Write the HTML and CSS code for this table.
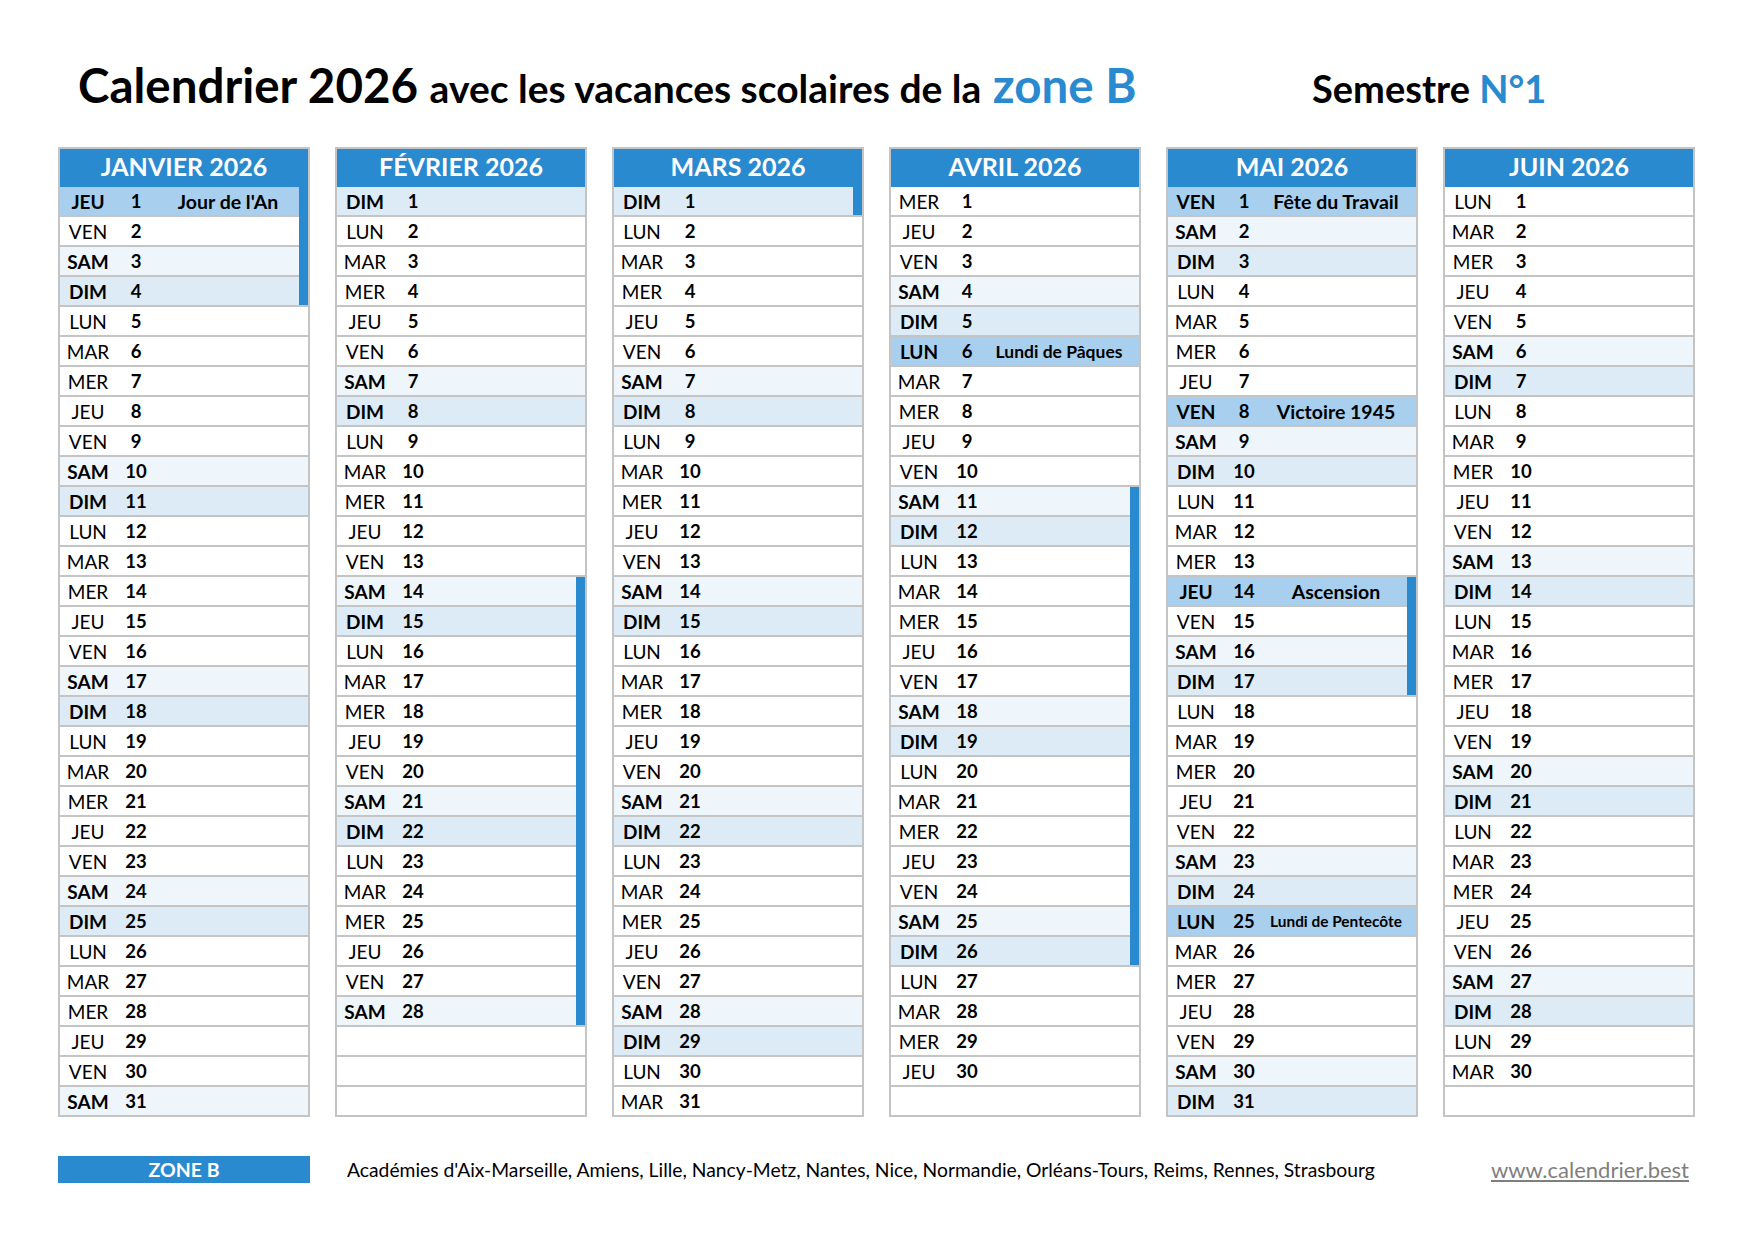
FILE: index.html
```html
<!DOCTYPE html>
<html lang="fr">
<head>
<meta charset="utf-8">
<title>Calendrier 2026 zone B - Semestre 1</title>
<link rel="stylesheet" href="styles.css">
</head>
<body>
<div class="page">
  <header class="title">
    <h1 class="t-main">Calendrier 2026 <span class="t-mid">avec les vacances scolaires de la</span> <span class="t-zone">zone B</span></h1>
    <div class="semestre">Semestre <span class="blue">N°1</span></div>
  </header>

  <main class="months">
    <section class="month">
      <div class="mh">JANVIER 2026</div>
      <div class="r hol v"><span class="d">JEU</span><span class="n">1</span><span class="l">Jour de l'An</span></div>
      <div class="r v"><span class="d">VEN</span><span class="n">2</span></div>
      <div class="r sa v"><span class="d">SAM</span><span class="n">3</span></div>
      <div class="r di v ve"><span class="d">DIM</span><span class="n">4</span></div>
      <div class="r"><span class="d">LUN</span><span class="n">5</span></div>
      <div class="r"><span class="d">MAR</span><span class="n">6</span></div>
      <div class="r"><span class="d">MER</span><span class="n">7</span></div>
      <div class="r"><span class="d">JEU</span><span class="n">8</span></div>
      <div class="r"><span class="d">VEN</span><span class="n">9</span></div>
      <div class="r sa"><span class="d">SAM</span><span class="n">10</span></div>
      <div class="r di"><span class="d">DIM</span><span class="n">11</span></div>
      <div class="r"><span class="d">LUN</span><span class="n">12</span></div>
      <div class="r"><span class="d">MAR</span><span class="n">13</span></div>
      <div class="r"><span class="d">MER</span><span class="n">14</span></div>
      <div class="r"><span class="d">JEU</span><span class="n">15</span></div>
      <div class="r"><span class="d">VEN</span><span class="n">16</span></div>
      <div class="r sa"><span class="d">SAM</span><span class="n">17</span></div>
      <div class="r di"><span class="d">DIM</span><span class="n">18</span></div>
      <div class="r"><span class="d">LUN</span><span class="n">19</span></div>
      <div class="r"><span class="d">MAR</span><span class="n">20</span></div>
      <div class="r"><span class="d">MER</span><span class="n">21</span></div>
      <div class="r"><span class="d">JEU</span><span class="n">22</span></div>
      <div class="r"><span class="d">VEN</span><span class="n">23</span></div>
      <div class="r sa"><span class="d">SAM</span><span class="n">24</span></div>
      <div class="r di"><span class="d">DIM</span><span class="n">25</span></div>
      <div class="r"><span class="d">LUN</span><span class="n">26</span></div>
      <div class="r"><span class="d">MAR</span><span class="n">27</span></div>
      <div class="r"><span class="d">MER</span><span class="n">28</span></div>
      <div class="r"><span class="d">JEU</span><span class="n">29</span></div>
      <div class="r"><span class="d">VEN</span><span class="n">30</span></div>
      <div class="r sa"><span class="d">SAM</span><span class="n">31</span></div>
    </section>

    <section class="month">
      <div class="mh">FÉVRIER 2026</div>
      <div class="r di"><span class="d">DIM</span><span class="n">1</span></div>
      <div class="r"><span class="d">LUN</span><span class="n">2</span></div>
      <div class="r"><span class="d">MAR</span><span class="n">3</span></div>
      <div class="r"><span class="d">MER</span><span class="n">4</span></div>
      <div class="r"><span class="d">JEU</span><span class="n">5</span></div>
      <div class="r"><span class="d">VEN</span><span class="n">6</span></div>
      <div class="r sa"><span class="d">SAM</span><span class="n">7</span></div>
      <div class="r di"><span class="d">DIM</span><span class="n">8</span></div>
      <div class="r"><span class="d">LUN</span><span class="n">9</span></div>
      <div class="r"><span class="d">MAR</span><span class="n">10</span></div>
      <div class="r"><span class="d">MER</span><span class="n">11</span></div>
      <div class="r"><span class="d">JEU</span><span class="n">12</span></div>
      <div class="r"><span class="d">VEN</span><span class="n">13</span></div>
      <div class="r sa v"><span class="d">SAM</span><span class="n">14</span></div>
      <div class="r di v"><span class="d">DIM</span><span class="n">15</span></div>
      <div class="r v"><span class="d">LUN</span><span class="n">16</span></div>
      <div class="r v"><span class="d">MAR</span><span class="n">17</span></div>
      <div class="r v"><span class="d">MER</span><span class="n">18</span></div>
      <div class="r v"><span class="d">JEU</span><span class="n">19</span></div>
      <div class="r v"><span class="d">VEN</span><span class="n">20</span></div>
      <div class="r sa v"><span class="d">SAM</span><span class="n">21</span></div>
      <div class="r di v"><span class="d">DIM</span><span class="n">22</span></div>
      <div class="r v"><span class="d">LUN</span><span class="n">23</span></div>
      <div class="r v"><span class="d">MAR</span><span class="n">24</span></div>
      <div class="r v"><span class="d">MER</span><span class="n">25</span></div>
      <div class="r v"><span class="d">JEU</span><span class="n">26</span></div>
      <div class="r v"><span class="d">VEN</span><span class="n">27</span></div>
      <div class="r sa v ve"><span class="d">SAM</span><span class="n">28</span></div>
      <div class="r"></div>
      <div class="r"></div>
      <div class="r"></div>
    </section>

    <section class="month">
      <div class="mh">MARS 2026</div>
      <div class="r di v ve"><span class="d">DIM</span><span class="n">1</span></div>
      <div class="r"><span class="d">LUN</span><span class="n">2</span></div>
      <div class="r"><span class="d">MAR</span><span class="n">3</span></div>
      <div class="r"><span class="d">MER</span><span class="n">4</span></div>
      <div class="r"><span class="d">JEU</span><span class="n">5</span></div>
      <div class="r"><span class="d">VEN</span><span class="n">6</span></div>
      <div class="r sa"><span class="d">SAM</span><span class="n">7</span></div>
      <div class="r di"><span class="d">DIM</span><span class="n">8</span></div>
      <div class="r"><span class="d">LUN</span><span class="n">9</span></div>
      <div class="r"><span class="d">MAR</span><span class="n">10</span></div>
      <div class="r"><span class="d">MER</span><span class="n">11</span></div>
      <div class="r"><span class="d">JEU</span><span class="n">12</span></div>
      <div class="r"><span class="d">VEN</span><span class="n">13</span></div>
      <div class="r sa"><span class="d">SAM</span><span class="n">14</span></div>
      <div class="r di"><span class="d">DIM</span><span class="n">15</span></div>
      <div class="r"><span class="d">LUN</span><span class="n">16</span></div>
      <div class="r"><span class="d">MAR</span><span class="n">17</span></div>
      <div class="r"><span class="d">MER</span><span class="n">18</span></div>
      <div class="r"><span class="d">JEU</span><span class="n">19</span></div>
      <div class="r"><span class="d">VEN</span><span class="n">20</span></div>
      <div class="r sa"><span class="d">SAM</span><span class="n">21</span></div>
      <div class="r di"><span class="d">DIM</span><span class="n">22</span></div>
      <div class="r"><span class="d">LUN</span><span class="n">23</span></div>
      <div class="r"><span class="d">MAR</span><span class="n">24</span></div>
      <div class="r"><span class="d">MER</span><span class="n">25</span></div>
      <div class="r"><span class="d">JEU</span><span class="n">26</span></div>
      <div class="r"><span class="d">VEN</span><span class="n">27</span></div>
      <div class="r sa"><span class="d">SAM</span><span class="n">28</span></div>
      <div class="r di"><span class="d">DIM</span><span class="n">29</span></div>
      <div class="r"><span class="d">LUN</span><span class="n">30</span></div>
      <div class="r"><span class="d">MAR</span><span class="n">31</span></div>
    </section>

    <section class="month">
      <div class="mh">AVRIL 2026</div>
      <div class="r"><span class="d">MER</span><span class="n">1</span></div>
      <div class="r"><span class="d">JEU</span><span class="n">2</span></div>
      <div class="r"><span class="d">VEN</span><span class="n">3</span></div>
      <div class="r sa"><span class="d">SAM</span><span class="n">4</span></div>
      <div class="r di"><span class="d">DIM</span><span class="n">5</span></div>
      <div class="r hol"><span class="d">LUN</span><span class="n">6</span><span class="l sm">Lundi de Pâques</span></div>
      <div class="r"><span class="d">MAR</span><span class="n">7</span></div>
      <div class="r"><span class="d">MER</span><span class="n">8</span></div>
      <div class="r"><span class="d">JEU</span><span class="n">9</span></div>
      <div class="r"><span class="d">VEN</span><span class="n">10</span></div>
      <div class="r sa v"><span class="d">SAM</span><span class="n">11</span></div>
      <div class="r di v"><span class="d">DIM</span><span class="n">12</span></div>
      <div class="r v"><span class="d">LUN</span><span class="n">13</span></div>
      <div class="r v"><span class="d">MAR</span><span class="n">14</span></div>
      <div class="r v"><span class="d">MER</span><span class="n">15</span></div>
      <div class="r v"><span class="d">JEU</span><span class="n">16</span></div>
      <div class="r v"><span class="d">VEN</span><span class="n">17</span></div>
      <div class="r sa v"><span class="d">SAM</span><span class="n">18</span></div>
      <div class="r di v"><span class="d">DIM</span><span class="n">19</span></div>
      <div class="r v"><span class="d">LUN</span><span class="n">20</span></div>
      <div class="r v"><span class="d">MAR</span><span class="n">21</span></div>
      <div class="r v"><span class="d">MER</span><span class="n">22</span></div>
      <div class="r v"><span class="d">JEU</span><span class="n">23</span></div>
      <div class="r v"><span class="d">VEN</span><span class="n">24</span></div>
      <div class="r sa v"><span class="d">SAM</span><span class="n">25</span></div>
      <div class="r di v ve"><span class="d">DIM</span><span class="n">26</span></div>
      <div class="r"><span class="d">LUN</span><span class="n">27</span></div>
      <div class="r"><span class="d">MAR</span><span class="n">28</span></div>
      <div class="r"><span class="d">MER</span><span class="n">29</span></div>
      <div class="r"><span class="d">JEU</span><span class="n">30</span></div>
      <div class="r"></div>
    </section>

    <section class="month">
      <div class="mh">MAI 2026</div>
      <div class="r hol"><span class="d">VEN</span><span class="n">1</span><span class="l">Fête du Travail</span></div>
      <div class="r sa"><span class="d">SAM</span><span class="n">2</span></div>
      <div class="r di"><span class="d">DIM</span><span class="n">3</span></div>
      <div class="r"><span class="d">LUN</span><span class="n">4</span></div>
      <div class="r"><span class="d">MAR</span><span class="n">5</span></div>
      <div class="r"><span class="d">MER</span><span class="n">6</span></div>
      <div class="r"><span class="d">JEU</span><span class="n">7</span></div>
      <div class="r hol"><span class="d">VEN</span><span class="n">8</span><span class="l">Victoire 1945</span></div>
      <div class="r sa"><span class="d">SAM</span><span class="n">9</span></div>
      <div class="r di"><span class="d">DIM</span><span class="n">10</span></div>
      <div class="r"><span class="d">LUN</span><span class="n">11</span></div>
      <div class="r"><span class="d">MAR</span><span class="n">12</span></div>
      <div class="r"><span class="d">MER</span><span class="n">13</span></div>
      <div class="r hol v"><span class="d">JEU</span><span class="n">14</span><span class="l">Ascension</span></div>
      <div class="r v"><span class="d">VEN</span><span class="n">15</span></div>
      <div class="r sa v"><span class="d">SAM</span><span class="n">16</span></div>
      <div class="r di v ve"><span class="d">DIM</span><span class="n">17</span></div>
      <div class="r"><span class="d">LUN</span><span class="n">18</span></div>
      <div class="r"><span class="d">MAR</span><span class="n">19</span></div>
      <div class="r"><span class="d">MER</span><span class="n">20</span></div>
      <div class="r"><span class="d">JEU</span><span class="n">21</span></div>
      <div class="r"><span class="d">VEN</span><span class="n">22</span></div>
      <div class="r sa"><span class="d">SAM</span><span class="n">23</span></div>
      <div class="r di"><span class="d">DIM</span><span class="n">24</span></div>
      <div class="r hol"><span class="d">LUN</span><span class="n">25</span><span class="l xs">Lundi de Pentecôte</span></div>
      <div class="r"><span class="d">MAR</span><span class="n">26</span></div>
      <div class="r"><span class="d">MER</span><span class="n">27</span></div>
      <div class="r"><span class="d">JEU</span><span class="n">28</span></div>
      <div class="r"><span class="d">VEN</span><span class="n">29</span></div>
      <div class="r sa"><span class="d">SAM</span><span class="n">30</span></div>
      <div class="r di"><span class="d">DIM</span><span class="n">31</span></div>
    </section>

    <section class="month">
      <div class="mh">JUIN 2026</div>
      <div class="r"><span class="d">LUN</span><span class="n">1</span></div>
      <div class="r"><span class="d">MAR</span><span class="n">2</span></div>
      <div class="r"><span class="d">MER</span><span class="n">3</span></div>
      <div class="r"><span class="d">JEU</span><span class="n">4</span></div>
      <div class="r"><span class="d">VEN</span><span class="n">5</span></div>
      <div class="r sa"><span class="d">SAM</span><span class="n">6</span></div>
      <div class="r di"><span class="d">DIM</span><span class="n">7</span></div>
      <div class="r"><span class="d">LUN</span><span class="n">8</span></div>
      <div class="r"><span class="d">MAR</span><span class="n">9</span></div>
      <div class="r"><span class="d">MER</span><span class="n">10</span></div>
      <div class="r"><span class="d">JEU</span><span class="n">11</span></div>
      <div class="r"><span class="d">VEN</span><span class="n">12</span></div>
      <div class="r sa"><span class="d">SAM</span><span class="n">13</span></div>
      <div class="r di"><span class="d">DIM</span><span class="n">14</span></div>
      <div class="r"><span class="d">LUN</span><span class="n">15</span></div>
      <div class="r"><span class="d">MAR</span><span class="n">16</span></div>
      <div class="r"><span class="d">MER</span><span class="n">17</span></div>
      <div class="r"><span class="d">JEU</span><span class="n">18</span></div>
      <div class="r"><span class="d">VEN</span><span class="n">19</span></div>
      <div class="r sa"><span class="d">SAM</span><span class="n">20</span></div>
      <div class="r di"><span class="d">DIM</span><span class="n">21</span></div>
      <div class="r"><span class="d">LUN</span><span class="n">22</span></div>
      <div class="r"><span class="d">MAR</span><span class="n">23</span></div>
      <div class="r"><span class="d">MER</span><span class="n">24</span></div>
      <div class="r"><span class="d">JEU</span><span class="n">25</span></div>
      <div class="r"><span class="d">VEN</span><span class="n">26</span></div>
      <div class="r sa"><span class="d">SAM</span><span class="n">27</span></div>
      <div class="r di"><span class="d">DIM</span><span class="n">28</span></div>
      <div class="r"><span class="d">LUN</span><span class="n">29</span></div>
      <div class="r"><span class="d">MAR</span><span class="n">30</span></div>
      <div class="r"></div>
    </section>
  </main>

  <footer class="footer">
    <div class="zone">ZONE B</div>
    <div class="acad">Académies d'Aix-Marseille, Amiens, Lille, Nancy-Metz, Nantes, Nice, Normandie, Orléans-Tours, Reims, Rennes, Strasbourg</div>
    <a class="url" href="#">www.calendrier.best</a>
  </footer>
</div>
</body>
</html>
```

FILE: styles.css
```css
* { box-sizing: border-box; }

body {
  margin: 0;
  background: #fff;
  color: #000;
  font-family: Lato, "Open Sans", "Liberation Sans", sans-serif;
}

.page {
  width: 1754px;
  height: 1240px;
  padding: 56px 0 0 58px;
}

/* ---------- title ---------- */
.title {
  display: grid;
  grid-template-columns: 1234px auto;
  align-items: baseline;
  padding-left: 20px;
  height: 58px;
  margin-bottom: 33px;
}

.t-main {
  margin: 0;
  font-size: 47.5px;
  line-height: 58px;
  font-weight: 700;
  white-space: nowrap;
}

.t-mid { font-size: 39px; }

.t-zone { font-size: 47.5px; color: #2a8ad0; }

.semestre {
  font-size: 38px;
  font-weight: 700;
  white-space: nowrap;
}

.blue { color: #2a8ad0; }

/* ---------- months ---------- */
.months {
  display: grid;
  grid-template-columns: repeat(6, 252px);
  column-gap: 25px;
}

.month {
  border: 2px solid #c4c4c4;
}

.mh {
  height: 38px;
  line-height: 35px;
  background: #2a8ad0;
  color: #fff;
  font-size: 25px;
  font-weight: 700;
  text-align: center;
}

.r {
  position: relative;
  display: flex;
  align-items: center;
  height: 30px;
  border-bottom: 2px solid #c4c4c4;
  font-size: 18.5px;
}

.r:last-child { border-bottom: 0; height: 28px; }

.d {
  width: 56px;
  font-size: 19px;
  text-align: center;
}

.n {
  width: 40px;
  text-align: center;
  font-weight: 700;
}

.l {
  flex: 1;
  padding-right: 8px;
  font-size: 19.5px;
  text-align: center;
  font-weight: 700;
  white-space: nowrap;
}

.l.sm { font-size: 17.5px; }
.l.xs { font-size: 15.4px; }

.sa { background: #eef6fc; }
.di { background: #ddebf7; }
.hol { background: #a8cfee; }

.sa .d, .di .d, .hol .d { font-weight: 700; }

/* school holidays bar */
.v::after {
  content: "";
  position: absolute;
  top: 0;
  right: 0;
  bottom: -2px;
  width: 9px;
  background: #2a8ad0;
}

.v.ve::after { bottom: 0; }

/* ---------- footer ---------- */
.footer {
  display: flex;
  align-items: center;
  width: 1637px;
  height: 27px;
  margin-top: 39px;
}

.zone {
  width: 252px;
  height: 27px;
  line-height: 27px;
  background: #2a8ad0;
  color: #fff;
  font-size: 19.5px;
  font-weight: 700;
  text-align: center;
}

.acad {
  margin-left: 37px;
  font-size: 19.3px;
  white-space: nowrap;
}

.url {
  margin-left: auto;
  margin-right: 6px;
  color: #7f7f7f;
  font-size: 22px;
  text-decoration: underline;
}
```
